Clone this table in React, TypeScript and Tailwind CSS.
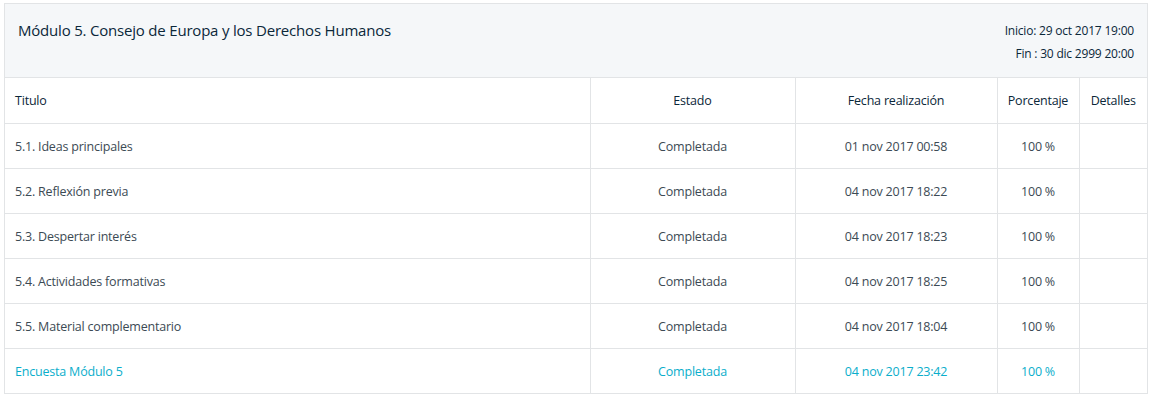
import React from 'react';

interface Row {
  titulo: string;
  estado: string;
  fecha: string;
  porcentaje: string;
  highlight?: boolean;
}

const rows: Row[] = [
  { titulo: '5.1. Ideas principales', estado: 'Completada', fecha: '01 nov 2017 00:58', porcentaje: '100 %' },
  { titulo: '5.2. Reflexión previa', estado: 'Completada', fecha: '04 nov 2017 18:22', porcentaje: '100 %' },
  { titulo: '5.3. Despertar interés', estado: 'Completada', fecha: '04 nov 2017 18:23', porcentaje: '100 %' },
  { titulo: '5.4. Actividades formativas', estado: 'Completada', fecha: '04 nov 2017 18:25', porcentaje: '100 %' },
  { titulo: '5.5. Material complementario', estado: 'Completada', fecha: '04 nov 2017 18:04', porcentaje: '100 %' },
  { titulo: 'Encuesta Módulo 5', estado: 'Completada', fecha: '04 nov 2017 23:42', porcentaje: '100 %', highlight: true },
];

const App: React.FC = () => {
  return (
    <div className="w-[1151px] h-[397px] bg-white pt-[3px] pl-[4px] font-['Open_Sans',sans-serif]">
      <div className="w-[1144px] border border-[#e2e4e6]">
        {/* Header */}
        <div className="h-[74px] bg-[#f5f7f9] flex justify-between border-b border-[#e2e4e6]">
          <h3 className="pl-[13px] pt-[15px] text-[15px] text-[#0b2739] tracking-[-0.2px]">
            Módulo 5. Consejo de Europa y los Derechos Humanos
          </h3>
          <div className="pr-[13px] pt-[15px] text-right text-[12px] text-[#0b2739] leading-[23px] tracking-[-0.2px]">
            <p>Inicio: 29 oct 2017 19:00</p>
            <p>Fin : 30 dic 2999 20:00</p>
          </div>
        </div>

        {/* Table */}
        <table className="w-full border-collapse text-[12.5px] tracking-[-0.2px]">
          <thead>
            <tr className="h-[45px] text-[#0b2739]">
              <th className="w-[585px] text-left font-normal pl-[10px] pt-[2px] border-r border-[#e2e4e6]">Titulo</th>
              <th className="w-[205px] font-normal pt-[2px] border-r border-[#e2e4e6]">Estado</th>
              <th className="w-[202px] font-normal pt-[2px] border-r border-[#e2e4e6]">Fecha realización</th>
              <th className="w-[82px] font-normal pt-[2px] border-r border-[#e2e4e6]">Porcentaje</th>
              <th className="font-normal pt-[2px]">Detalles</th>
            </tr>
          </thead>
          <tbody>
            {rows.map((r) => (
              <tr
                key={r.titulo}
                className={`h-[45px] border-t border-[#e2e4e6] ${r.highlight ? 'text-[#0aaecb]' : 'text-[#3c4a54]'}`}
              >
                <td className="pl-[10px] pt-[3px] border-r border-[#e2e4e6]">{r.titulo}</td>
                <td className="text-center pt-[3px] border-r border-[#e2e4e6]">{r.estado}</td>
                <td className="text-center pt-[3px] border-r border-[#e2e4e6]">{r.fecha}</td>
                <td className="text-center pt-[3px] border-r border-[#e2e4e6]">{r.porcentaje}</td>
                <td></td>
              </tr>
            ))}
          </tbody>
        </table>
      </div>
    </div>
  );
};

export default App;
